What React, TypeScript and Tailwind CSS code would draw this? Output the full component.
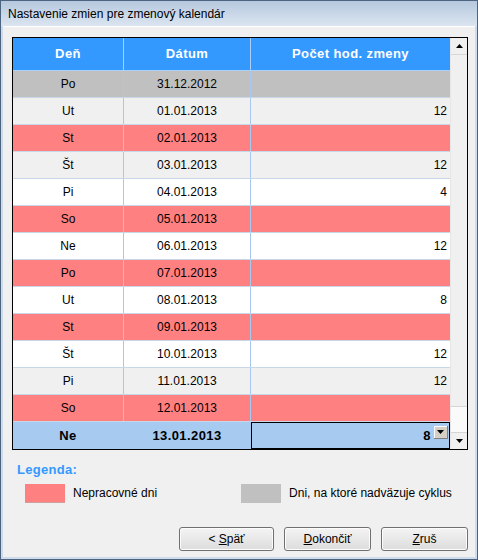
import React from 'react';

type Row = {
  day: string;
  date: string;
  hours?: string;
  kind: 'gray' | 'light' | 'white' | 'red' | 'sel';
};

const rows: Row[] = [
  { day: 'Po', date: '31.12.2012', kind: 'gray' },
  { day: 'Ut', date: '01.01.2013', hours: '12', kind: 'light' },
  { day: 'St', date: '02.01.2013', kind: 'red' },
  { day: 'Št', date: '03.01.2013', hours: '12', kind: 'light' },
  { day: 'Pi', date: '04.01.2013', hours: '4', kind: 'white' },
  { day: 'So', date: '05.01.2013', kind: 'red' },
  { day: 'Ne', date: '06.01.2013', hours: '12', kind: 'white' },
  { day: 'Po', date: '07.01.2013', kind: 'red' },
  { day: 'Ut', date: '08.01.2013', hours: '8', kind: 'white' },
  { day: 'St', date: '09.01.2013', kind: 'red' },
  { day: 'Št', date: '10.01.2013', hours: '12', kind: 'white' },
  { day: 'Pi', date: '11.01.2013', hours: '12', kind: 'light' },
  { day: 'So', date: '12.01.2013', kind: 'red' },
  { day: 'Ne', date: '13.01.2013', hours: '8', kind: 'sel' },
];

const rowBg: Record<Row['kind'], string> = {
  gray: 'bg-[#c0c0c0]',
  light: 'bg-[#f0f0f0]',
  white: 'bg-white',
  red: 'bg-[#ff8080]',
  sel: 'bg-[#a6caf0]',
};

const Arrow = ({ up }: { up?: boolean }) => (
  <svg width="7" height="4" viewBox="0 0 7 4">
    <path d={up ? 'M0 4 L3.5 0 L7 4 Z' : 'M0 0 L3.5 4 L7 0 Z'} fill="#000" />
  </svg>
);

const Button = ({ children, wide }: { children: React.ReactNode; wide?: boolean }) => (
  <button
    className={`${wide ? 'w-[95px]' : 'w-[87px]'} h-[24px] rounded-[3px] border border-[#707070] bg-gradient-to-b from-[#f4f4f4] to-[#dcdcdc] text-[12px] text-black shadow-[inset_0_0_0_1px_#fcfcfc]`}
  >
    {children}
  </button>
);

export default function App() {
  return (
    <div
      className="w-[478px] h-[560px] flex flex-col bg-[#cfdbea] border border-[#4d6480] text-black"
      style={{ fontFamily: '"Liberation Sans", Arial, sans-serif' }}
    >
      <div className="h-[25px] flex items-center pl-[7px] bg-gradient-to-b from-[#b6c8de] to-[#dbe5f0] text-[12px] text-black">
        Nastavenie zmien pre zmenový kalendár
      </div>
      <div className="flex-1 mx-[2px] mb-[2px] bg-[#f0f0f0] border-t border-white pt-[10px] pl-[9px] pr-[7px] flex flex-col">
        {/* grid */}
        <div className="w-[456px] border border-black flex">
          <div className="w-[437px] flex flex-col">
            <div className="h-[33px] flex bg-[#3399ff] text-white font-bold text-[13px] tracking-[0.4px] border-b border-[#a8d0f8]">
              <div className="w-[111px] flex items-center justify-center border-r border-[#a8d0f8]">Deň</div>
              <div className="w-[127px] flex items-center justify-center border-r border-[#a8d0f8]">Dátum</div>
              <div className="flex-1 flex items-center justify-center">Počet hod. zmeny</div>
            </div>
            {rows.map((r, i) => {
              const sel = r.kind === 'sel';
              return (
                <div
                  key={i}
                  className={`h-[27px] flex ${rowBg[r.kind]} ${sel ? 'font-bold text-[13px] tracking-[0.4px]' : 'text-[12px] border-b border-[#c8d6ea]'}`}
                >
                  <div className="w-[111px] flex items-center justify-center border-r border-[#a8c8f0]">{r.day}</div>
                  <div className="w-[127px] flex items-center justify-center border-r border-[#a8c8f0]">{r.date}</div>
                  {sel ? (
                    <div className="flex-1 flex items-center justify-end border border-black pr-[1px] gap-[3px]">
                      <span>{r.hours}</span>
                      <span className="w-[14px] h-[13px] bg-[#d4d0c8] border-r border-b border-[#808080] shadow-[inset_1px_1px_0_#fff] flex items-center justify-center mb-[6px]">
                        <Arrow />
                      </span>
                    </div>
                  ) : (
                    <div className="flex-1 flex items-center justify-end pr-[3px]">{r.hours}</div>
                  )}
                </div>
              );
            })}
          </div>
          {/* scrollbar */}
          <div className="w-[17px] flex flex-col bg-[#fafafa] border-l border-[#e6e6e6]">
            <div className="h-[17px] flex items-center justify-center bg-[#f0f0f0] border-b border-[#d6d6d6]">
              <Arrow up />
            </div>
            <div className="h-[352px] bg-[#f0f0f0] border-b border-[#d6d6d6]" />
            <div className="flex-1" />
            <div className="h-[17px] flex items-center justify-center bg-[#f0f0f0] border-t border-[#d6d6d6]">
              <Arrow />
            </div>
          </div>
        </div>
        {/* legend */}
        <div className="mt-[10px] pl-[5px] text-[13px] font-bold text-[#3399ff] tracking-[0.3px]">Legenda:</div>
        <div className="mt-[4px] flex items-center text-[12px]">
          <div className="ml-[13px] w-[40px] h-[19px] bg-[#ff8080] border-b border-[#d0a0a0]" />
          <span className="ml-[8px]">Nepracovné dni</span>
          <div className="ml-[84px] w-[40px] h-[19px] bg-[#c0c0c0]" />
          <span className="ml-[8px]">Dni, na ktoré nadväzuje cyklus</span>
        </div>
        {/* buttons */}
        <div className="mt-auto mb-[6px] flex justify-end gap-[10px]">
          <Button wide>
            &lt; <span className="underline">S</span>päť
          </Button>
          <Button>
            <span className="underline">D</span>okončiť
          </Button>
          <Button>
            <span className="underline">Z</span>ruš
          </Button>
        </div>
      </div>
    </div>
  );
}
